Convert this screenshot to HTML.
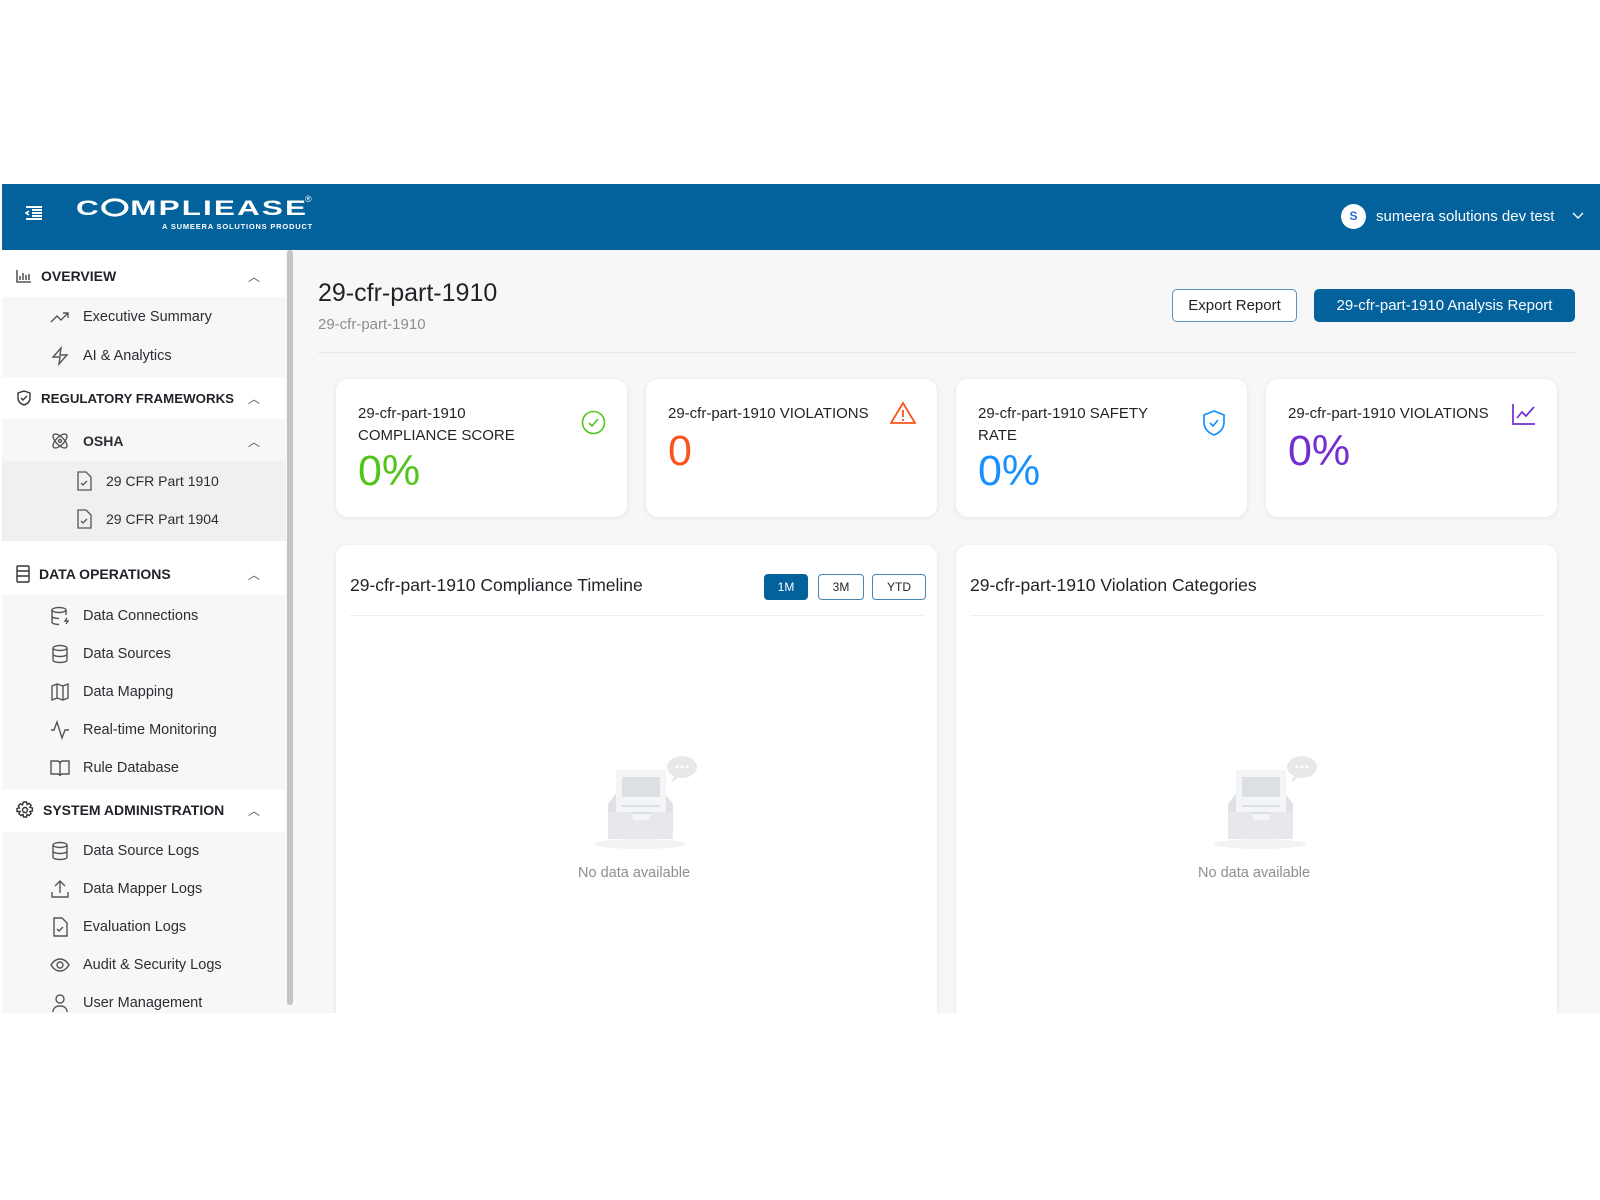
<!DOCTYPE html>
<html><head><meta charset="utf-8"><style>
*{box-sizing:border-box;margin:0;padding:0}
body{width:1600px;height:1200px;background:#fff;font-family:"Liberation Sans",sans-serif;position:relative;overflow:hidden;color:#1f2328}
.abs{position:absolute}
#hdr{left:2px;top:184px;width:1598px;height:66px;background:#03629c}
#app{left:2px;top:250px;width:1598px;height:763px;background:#f7f7f7;overflow:hidden}
#side{left:0;top:0;width:284px;height:763px;background:#fff}
.sec{position:absolute;left:14px;font-size:14px;font-weight:bold;color:#1f2328;display:flex;align-items:center;gap:9px;width:244px}
.sec .car{position:absolute;right:0;font-weight:normal;color:#555;font-size:12px}
.it{position:absolute;left:48px;font-size:14.5px;color:#2a2e33;display:flex;align-items:center;gap:13px}
.it svg,.sec svg{flex:none}
.gbg{position:absolute;left:0;width:284px;background:#f7f7f7}
.card{position:absolute;background:#fff;border-radius:12px;box-shadow:0 1px 6px rgba(0,0,0,.08)}
.lbl{position:absolute;left:22px;top:24px;font-size:15px;line-height:22px;color:#1f2328}
.num{position:absolute;left:22px;font-size:43px}
.btn{position:absolute;border-radius:5px;font-size:15px;display:flex;align-items:center;justify-content:center}
.pill{position:absolute;top:29px;height:26px;border-radius:4px;border:1.5px solid #4a86b3;font-size:12px;display:flex;align-items:center;justify-content:center;color:#1f2328}
.ctitle{position:absolute;left:14px;top:30px;font-size:17.5px;color:#1f2328}
.cdiv{position:absolute;left:14px;right:14px;top:70px;height:1px;background:#eceff1}
.nd{position:absolute;font-size:14.5px;color:#8a8f94}
</style></head><body>
<div id="hdr" class="abs">
 <svg class="abs" style="left:22px;top:20px" width="20" height="18" viewBox="0 0 20 18" fill="none" stroke="#fff" stroke-width="2"><path d="M2 3h16M8 9h10M2 15h16M8 6h10M8 12h10"/><path d="M5 7l-3 2 3 2" stroke-width="1.6"/></svg>
 <div class="abs" style="left:74px;top:13px;color:#fff;font-weight:bold;font-size:30px;letter-spacing:2px;transform:scale(1.05,.7);transform-origin:0 0;white-space:nowrap">C<span style="display:inline-block;width:26px;height:26px;border-radius:50%;border:4px solid #fff;vertical-align:-2px;margin-right:2px"></span>MPLIEASE</div>
 <div class="abs" style="left:303px;top:10px;color:#fff;font-size:9px">®</div>
 <div class="abs" style="left:160px;top:38px;color:#fff;font-weight:bold;font-size:7.5px;letter-spacing:.8px">A SUMEERA SOLUTIONS PRODUCT</div>
 <div class="abs" style="left:1339px;top:20px;width:25px;height:25px;border-radius:50%;background:#fff;color:#2a6fd6;font-size:12px;font-weight:bold;text-align:center;line-height:25px">S</div>
 <div class="abs" style="left:1374px;top:24px;color:#fff;font-size:15px">sumeera solutions dev test</div>
 <svg class="abs" style="left:1570px;top:28px" width="12" height="8" viewBox="0 0 12 8" fill="none" stroke="#fff" stroke-width="1.4"><path d="M1 1l5 5 5-5"/></svg>
</div>
<div id="app" class="abs">
 <div id="side" class="abs">
  <div class="gbg" style="top:47px;height:80px"></div>
  <div class="gbg" style="top:169px;height:122px"></div>
  <div class="gbg" style="top:211px;height:80px;background:#f0f0f0"></div>
  <div class="gbg" style="top:345px;height:195px"></div>
  <div class="gbg" style="top:582px;height:190px"></div>
  <div class="sec" style="top:18px"><svg width="16" height="14" viewBox="0 0 16 14" fill="none" stroke="#333" stroke-width="1.3"><path d="M1 1v12h14M4 11V7M7 11V4M10 11V6M13 11V5"/></svg>OVERVIEW<span class="car">︿</span></div>
  <div class="it" style="top:59px"><svg width="20" height="14" viewBox="0 0 20 14" fill="none" stroke="#555" stroke-width="1.4"><path d="M1 12l6-6 4 4 7-7M13 3h5v5"/></svg>Executive Summary</div>
  <div class="it" style="top:96px"><svg width="20" height="20" viewBox="0 0 20 20" fill="none" stroke="#555" stroke-width="1.4"><path d="M11 2L3 11h7l-1 7 8-9h-7z"/></svg>AI &amp; Analytics</div>
  <div class="sec" style="top:140px;font-size:13.3px"><svg width="16" height="16" viewBox="0 0 16 16" fill="none" stroke="#333" stroke-width="1.4"><path d="M8 1l6 2v5c0 4-3 6-6 7-3-1-6-3-6-7V3z"/><path d="M5 8l2 2 4-4"/></svg>REGULATORY FRAMEWORKS<span class="car">︿</span></div>
  <div class="it" style="top:181px;font-weight:bold;font-size:14px"><svg width="20" height="20" viewBox="0 0 20 20" fill="none" stroke="#555" stroke-width="1.4"><ellipse cx="10" cy="10" rx="9" ry="4" transform="rotate(45 10 10)"/><ellipse cx="10" cy="10" rx="9" ry="4" transform="rotate(-45 10 10)"/><circle cx="10" cy="10" r="1.5"/></svg>OSHA<span style="position:absolute;left:198px;font-weight:normal;color:#555;font-size:12px">︿</span></div>
  <div class="it" style="left:73px;top:221px;font-size:14px"><svg width="18" height="20" viewBox="0 0 18 20" fill="none" stroke="#555" stroke-width="1.3"><path d="M3 1h8l5 5v13H3z"/><path d="M6 12l2 2 4-4"/></svg>29 CFR Part 1910</div>
  <div class="it" style="left:73px;top:259px;font-size:14px"><svg width="18" height="20" viewBox="0 0 18 20" fill="none" stroke="#555" stroke-width="1.3"><path d="M3 1h8l5 5v13H3z"/><path d="M6 12l2 2 4-4"/></svg>29 CFR Part 1904</div>
  <div class="sec" style="top:315px"><svg width="14" height="18" viewBox="0 0 14 18" fill="none" stroke="#333" stroke-width="1.4"><rect x="1" y="1" width="12" height="16" rx="1"/><path d="M1 6h12M1 11h12"/></svg>DATA OPERATIONS<span class="car">︿</span></div>
  <div class="it" style="top:356px"><svg width="20" height="20" viewBox="0 0 20 20" fill="none" stroke="#555" stroke-width="1.4"><ellipse cx="9" cy="4" rx="7" ry="2.5"/><path d="M2 4v12c0 1.5 3 2.5 7 2.5M16 4v5M2 10c0 1.5 3 2.5 7 2.5M17 12l-2 3h3l-2 3"/></svg>Data Connections</div>
  <div class="it" style="top:394px"><svg width="20" height="20" viewBox="0 0 20 20" fill="none" stroke="#555" stroke-width="1.4"><ellipse cx="10" cy="4" rx="7" ry="2.5"/><path d="M3 4v12c0 1.5 3 2.5 7 2.5s7-1 7-2.5V4M3 10c0 1.5 3 2.5 7 2.5s7-1 7-2.5"/></svg>Data Sources</div>
  <div class="it" style="top:432px"><svg width="20" height="20" viewBox="0 0 20 20" fill="none" stroke="#555" stroke-width="1.4"><path d="M2 4l5-2 6 2 5-2v14l-5 2-6-2-5 2zM7 2v14M13 4v14"/></svg>Data Mapping</div>
  <div class="it" style="top:470px"><svg width="20" height="20" viewBox="0 0 20 20" fill="none" stroke="#555" stroke-width="1.4"><path d="M1 10h3l3-8 5 16 3-8h4"/></svg>Real-time Monitoring</div>
  <div class="it" style="top:508px"><svg width="20" height="20" viewBox="0 0 20 20" fill="none" stroke="#555" stroke-width="1.4"><path d="M1 3h6c2 0 3 1 3 3v12c0-1.5-1-2-3-2H1zM19 3h-6c-2 0-3 1-3 3v12c0-1.5 1-2 3-2h6z"/></svg>Rule Database</div>
  <div class="sec" style="top:551px"><svg width="18" height="18" viewBox="0 0 18 18" fill="none" stroke="#333" stroke-width="1.4"><path d="M7.5 1h3l.5 2.5 2-1.2 2.1 2.1-1.2 2 2.5.6v3l-2.5.5 1.2 2-2.1 2.1-2-1.2-.5 2.6h-3l-.5-2.6-2 1.2-2.1-2.1 1.2-2L1 10.5v-3l2.5-.6-1.2-2 2.1-2.1 2 1.2z"/><circle cx="9" cy="9" r="2.5"/></svg>SYSTEM ADMINISTRATION<span class="car">︿</span></div>
  <div class="it" style="top:591px"><svg width="20" height="20" viewBox="0 0 20 20" fill="none" stroke="#555" stroke-width="1.4"><ellipse cx="10" cy="4" rx="7" ry="2.5"/><path d="M3 4v12c0 1.5 3 2.5 7 2.5s7-1 7-2.5V4M3 10c0 1.5 3 2.5 7 2.5s7-1 7-2.5"/></svg>Data Source Logs</div>
  <div class="it" style="top:629px"><svg width="20" height="20" viewBox="0 0 20 20" fill="none" stroke="#555" stroke-width="1.4"><path d="M2 13v5h16v-5M10 14V2M5 7l5-5 5 5"/></svg>Data Mapper Logs</div>
  <div class="it" style="top:667px"><svg width="20" height="20" viewBox="0 0 20 20" fill="none" stroke="#555" stroke-width="1.4"><path d="M4 1h8l5 5v13H4z"/><path d="M7 12l2 2 4-4"/></svg>Evaluation Logs</div>
  <div class="it" style="top:705px"><svg width="20" height="20" viewBox="0 0 20 20" fill="none" stroke="#555" stroke-width="1.4"><path d="M1 10c3-5 6-6 9-6s6 1 9 6c-3 5-6 6-9 6s-6-1-9-6z"/><circle cx="10" cy="10" r="3"/></svg>Audit &amp; Security Logs</div>
  <div class="it" style="top:743px"><svg width="20" height="20" viewBox="0 0 20 20" fill="none" stroke="#555" stroke-width="1.4"><circle cx="10" cy="6" r="4"/><path d="M3 19c0-4 3-6 7-6s7 2 7 6"/></svg>User Management</div>
 </div>
 <div class="abs" style="left:285px;top:0;width:6px;height:755px;background:#c4c4c4;border-radius:3px"></div>
 <div class="abs" style="left:316px;top:29px;font-size:25px;color:#1f2328">29-cfr-part-1910</div>
 <div class="abs" style="left:316px;top:66px;font-size:15px;color:#8a8f94">29-cfr-part-1910</div>
 <div class="btn" style="left:1170px;top:39px;width:125px;height:33px;background:#fff;border:1.5px solid #5b93bd;color:#1f2328">Export Report</div>
 <div class="btn" style="left:1312px;top:39px;width:261px;height:33px;background:#03629c;color:#fff">29-cfr-part-1910 Analysis Report</div>
 <div class="abs" style="left:316px;top:102px;width:1258px;height:1px;background:#e8e8e8"></div>

 <div class="card" style="left:334px;top:129px;width:291px;height:138px"><div class="lbl">29-cfr-part-1910<br>COMPLIANCE SCORE</div><div class="num" style="top:68px;color:#52c41a">0%</div>
  <svg class="abs" style="left:245px;top:31px" width="25" height="25" viewBox="0 0 25 25" fill="none" stroke="#52c41a" stroke-width="1.6"><circle cx="12.5" cy="12.5" r="11"/><path d="M8 13l3 3 6-7"/></svg></div>
 <div class="card" style="left:644px;top:129px;width:291px;height:138px"><div class="lbl">29-cfr-part-1910 VIOLATIONS</div><div class="num" style="top:48px;color:#fa541c">0</div>
  <svg class="abs" style="left:244px;top:22px" width="26" height="24" viewBox="0 0 26 24" fill="none" stroke="#fa541c" stroke-width="1.8"><path d="M13 2L1 22h24z"/><path d="M13 9v7M13 18v2"/></svg></div>
 <div class="card" style="left:954px;top:129px;width:291px;height:138px"><div class="lbl">29-cfr-part-1910 SAFETY<br>RATE</div><div class="num" style="top:68px;color:#1890ff">0%</div>
  <svg class="abs" style="left:246px;top:31px" width="24" height="26" viewBox="0 0 24 26" fill="none" stroke="#1890ff" stroke-width="1.7"><path d="M12 1l10 4v7c0 7-5 11-10 13C7 23 2 19 2 12V5z"/><path d="M8 13l3 3 5-6"/></svg></div>
 <div class="card" style="left:1264px;top:129px;width:291px;height:138px"><div class="lbl">29-cfr-part-1910 VIOLATIONS</div><div class="num" style="top:48px;color:#722ed1">0%</div>
  <svg class="abs" style="left:246px;top:24px" width="24" height="22" viewBox="0 0 24 22" fill="none" stroke="#722ed1" stroke-width="1.7"><path d="M1 1v20h22M5 15l5-6 4 4 8-9"/></svg></div>

 <div class="card" style="left:334px;top:295px;width:601px;height:500px">
  <div class="ctitle">29-cfr-part-1910 Compliance Timeline</div>
  <div class="pill" style="left:428px;width:44px;background:#03629c;border-color:#03629c;color:#fff">1M</div>
  <div class="pill" style="left:482px;width:46px">3M</div>
  <div class="pill" style="left:536px;width:54px">YTD</div>
  <div class="cdiv"></div>
  <svg class="abs" style="left:256px;top:207px" width="110" height="100" viewBox="0 0 110 100"><ellipse cx="48" cy="92" rx="46" ry="5" fill="#f2f3f5"/><path d="M16 52l10-13h45l10 13v34H16z" fill="#dfe1e5"/><rect x="24" y="18" width="50" height="64" fill="#f4f5f7"/><rect x="30" y="25" width="38" height="20" fill="#dcdfe3"/><path d="M30 54h38M30 61h38" stroke="#dcdfe3" stroke-width="2"/><path d="M16 60h22l4 8h14l4-8h21v27H16z" fill="#e6e8eb"/><ellipse cx="90" cy="15" rx="15" ry="11" fill="#e7e8ea"/><path d="M82 24l-3 7 8-6z" fill="#e7e8ea"/><circle cx="85" cy="15" r="1.5" fill="#fff"/><circle cx="90" cy="15" r="1.5" fill="#fff"/><circle cx="95" cy="15" r="1.5" fill="#fff"/></svg>
  <div class="nd" style="left:242px;top:320px">No data available</div>
 </div>
 <div class="card" style="left:954px;top:295px;width:601px;height:500px">
  <div class="ctitle">29-cfr-part-1910 Violation Categories</div>
  <div class="cdiv"></div>
  <svg class="abs" style="left:256px;top:207px" width="110" height="100" viewBox="0 0 110 100"><ellipse cx="48" cy="92" rx="46" ry="5" fill="#f2f3f5"/><path d="M16 52l10-13h45l10 13v34H16z" fill="#dfe1e5"/><rect x="24" y="18" width="50" height="64" fill="#f4f5f7"/><rect x="30" y="25" width="38" height="20" fill="#dcdfe3"/><path d="M30 54h38M30 61h38" stroke="#dcdfe3" stroke-width="2"/><path d="M16 60h22l4 8h14l4-8h21v27H16z" fill="#e6e8eb"/><ellipse cx="90" cy="15" rx="15" ry="11" fill="#e7e8ea"/><path d="M82 24l-3 7 8-6z" fill="#e7e8ea"/><circle cx="85" cy="15" r="1.5" fill="#fff"/><circle cx="90" cy="15" r="1.5" fill="#fff"/><circle cx="95" cy="15" r="1.5" fill="#fff"/></svg>
  <div class="nd" style="left:242px;top:320px">No data available</div>
 </div>
</div>
</body></html>
